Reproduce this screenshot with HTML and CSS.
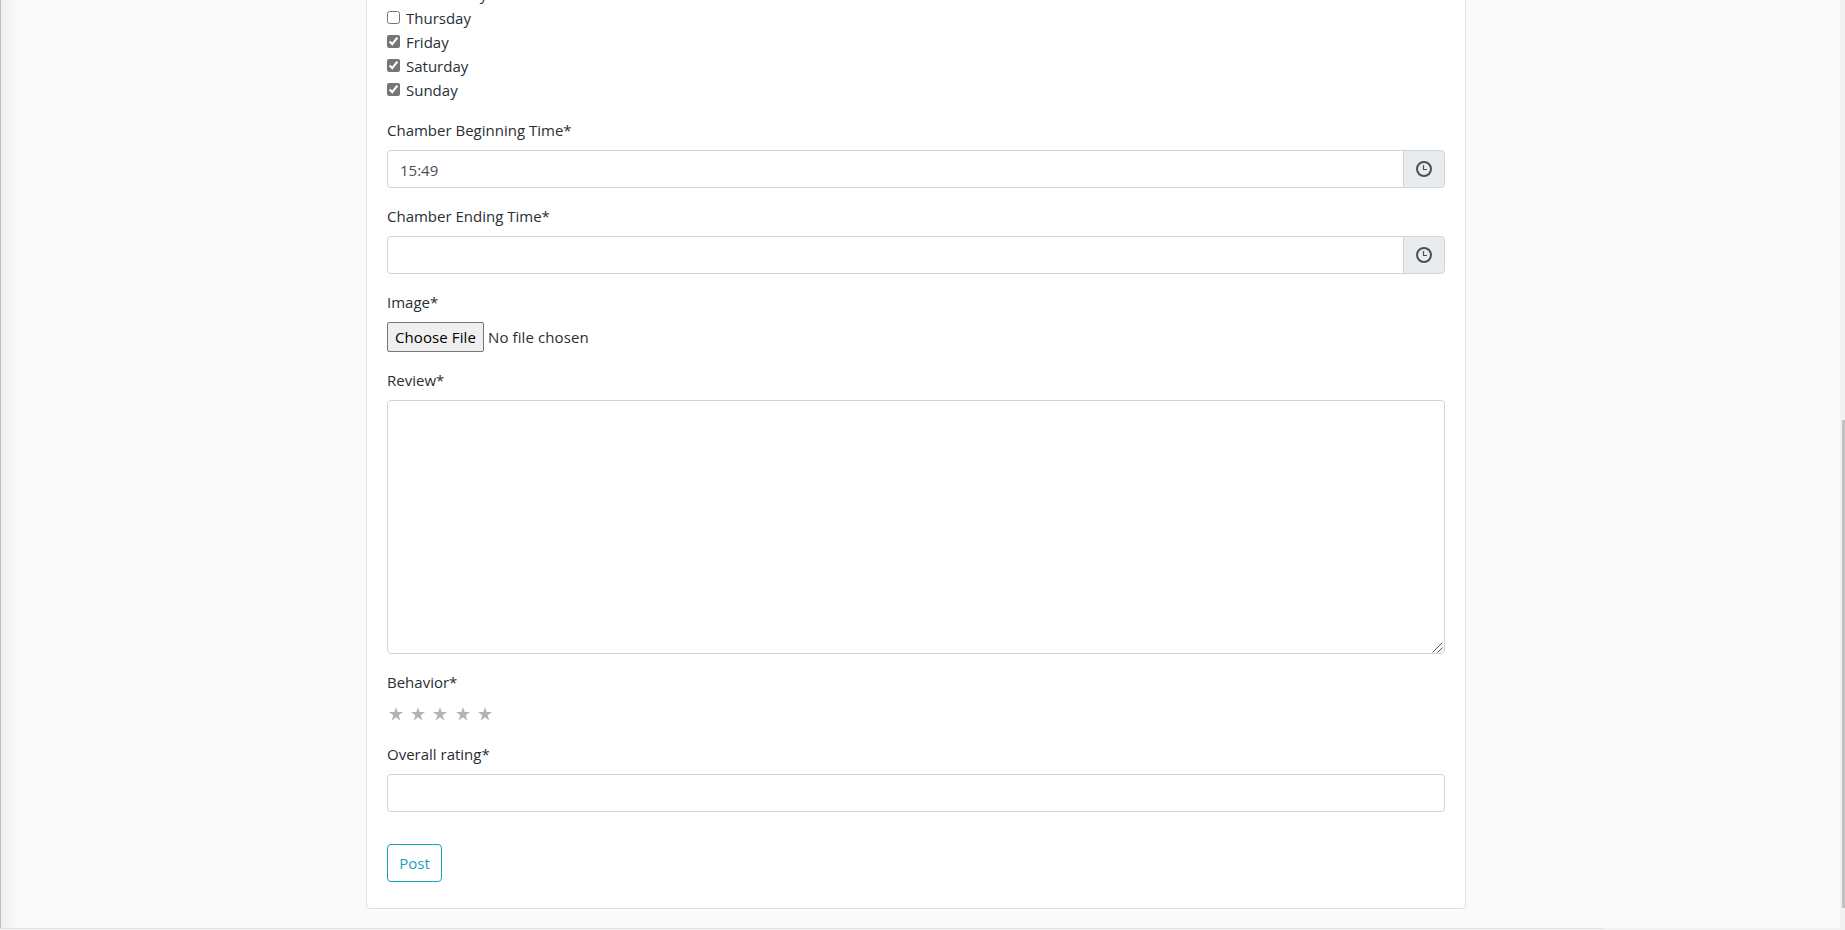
FILE: index.html
```
<!DOCTYPE html>
<html lang="en">
<head>
    <meta charset="UTF-8">
    <meta name="viewport" content="width=device-width, initial-scale=1.0">
    <title>Post a review</title>
    <link rel="stylesheet" href="styles.css">
</head>
<body>
    <div class="page-edge"></div>

    <div class="card">
        <form>
            <div class="form-group days">
                <label class="check"><input type="checkbox" name="days" value="wed"><span>Wednesday</span></label>
                <label class="check"><input type="checkbox" name="days" value="thu"><span>Thursday</span></label>
                <label class="check"><input type="checkbox" name="days" value="fri" checked><span>Friday</span></label>
                <label class="check"><input type="checkbox" name="days" value="sat" checked><span>Saturday</span></label>
                <label class="check"><input type="checkbox" name="days" value="sun" checked><span>Sunday</span></label>
            </div>

            <div class="form-group">
                <label for="begin">Chamber Beginning Time*</label>
                <div class="input-group">
                    <input type="text" id="begin" class="form-control" value="15:49">
                    <span class="input-addon">
                        <svg class="clock" viewBox="0 0 16 16"><circle cx="8" cy="8" r="7"/><path d="M7.5 4v4.5H11"/></svg>
                    </span>
                </div>
            </div>

            <div class="form-group">
                <label for="end">Chamber Ending Time*</label>
                <div class="input-group">
                    <input type="text" id="end" class="form-control">
                    <span class="input-addon">
                        <svg class="clock" viewBox="0 0 16 16"><circle cx="8" cy="8" r="7"/><path d="M7.5 4v4.5H11"/></svg>
                    </span>
                </div>
            </div>

            <div class="form-group">
                <label for="image">Image*</label>
                <input type="file" id="image" class="form-control-file">
            </div>

            <div class="form-group">
                <label for="review">Review*</label>
                <div class="textarea-wrap">
                    <textarea id="review" class="form-control" rows="10"></textarea>
                    <svg class="grip" viewBox="0 0 11 11"><path d="M.5 10.5l10-10M5.5 10.5l5-5"/></svg>
                </div>
            </div>

            <div class="form-group">
                <label>Behavior*</label>
                <div class="stars">
                    <svg viewBox="0 0 14 14"><path d="M7 0l1.65 5.1H14L9.7 8.3l1.6 5.1L7 10.3l-4.3 3.1 1.6-5.1L0 5.1h5.35z"/></svg>
                    <svg viewBox="0 0 14 14"><path d="M7 0l1.65 5.1H14L9.7 8.3l1.6 5.1L7 10.3l-4.3 3.1 1.6-5.1L0 5.1h5.35z"/></svg>
                    <svg viewBox="0 0 14 14"><path d="M7 0l1.65 5.1H14L9.7 8.3l1.6 5.1L7 10.3l-4.3 3.1 1.6-5.1L0 5.1h5.35z"/></svg>
                    <svg viewBox="0 0 14 14"><path d="M7 0l1.65 5.1H14L9.7 8.3l1.6 5.1L7 10.3l-4.3 3.1 1.6-5.1L0 5.1h5.35z"/></svg>
                    <svg viewBox="0 0 14 14"><path d="M7 0l1.65 5.1H14L9.7 8.3l1.6 5.1L7 10.3l-4.3 3.1 1.6-5.1L0 5.1h5.35z"/></svg>
                </div>
            </div>

            <div class="form-group">
                <label for="rating">Overall rating*</label>
                <input type="text" id="rating" class="form-control">
            </div>

            <button type="submit" class="btn-post">Post</button>
        </form>
    </div>

    <div class="bottom-line"></div>
    <div class="scroll-track"><div class="scroll-thumb"></div></div>
</body>
</html>
```
FILE: styles.css
```
* {
    box-sizing: border-box;
}
body {
    position: relative;
    height: 930px;
    margin: 0;
    overflow: hidden;
    background-color: #fafafa;
    color: #2a2e32;
    font-family: "Open Sans", "Noto Sans", sans-serif;
    font-size: 15px;
    line-height: 24px;
}
input, textarea, button {
    font-family: inherit;
    font-size: inherit;
    line-height: inherit;
}
.card {
    width: 1100px;
    margin: -39px 0 0 366px;
    padding: 20px 20px 26px;
    background-color: #fff;
    border: 1px solid #dfdfdf;
    border-radius: 4px;
}
.form-group {
    margin-bottom: 16px;
}
label {
    display: block;
    margin-bottom: 8px;
}
.check {
    display: flex;
    align-items: center;
    gap: 6px;
    margin: 0;
}
.check input {
    width: 13px;
    height: 13px;
    margin: 0 0 1px;
    accent-color: #767676;
}
.form-control {
    display: block;
    width: 100%;
    height: 38px;
    padding: 7px 12px 5px;
    color: #495057;
    background-color: #fff;
    border: 1px solid #ced4da;
    border-radius: 4px;
}
.textarea-wrap {
    position: relative;
}
textarea.form-control {
    height: 254px;
    resize: none;
}
.grip {
    position: absolute;
    right: 2px;
    bottom: 1px;
    width: 11px;
    height: 11px;
    fill: none;
    stroke: #555;
}
.input-group {
    display: flex;
}
.input-group .form-control {
    flex: 1;
    border-radius: 4px 0 0 4px;
}
.input-addon {
    display: flex;
    align-items: center;
    justify-content: center;
    width: 42px;
    margin-left: -1px;
    background-color: #e9ecef;
    border: 1px solid #ced4da;
    border-radius: 0 4px 4px 0;
}
.clock {
    width: 16px;
    height: 16px;
    margin-right: 1px;
    fill: none;
    stroke: #495057;
    stroke-width: 2;
}
.clock path {
    stroke-width: 1.2;
}
.form-control-file {
    display: block;
    width: 100%;
    height: 30px;
    letter-spacing: 0.1px;
}
.form-control-file::file-selector-button {
    height: 30px;
    margin: 0 4px 0 0;
    padding: 1px 7px;
    font: inherit;
    letter-spacing: 0.1px;
    color: #000;
    background-color: #efefef;
    border: 1px solid #767676;
    border-radius: 2px;
}
.stars {
    display: flex;
    gap: 8.4px;
    height: 24px;
    padding: 5px 1.5px 0;
}
.stars svg {
    width: 14px;
    height: 14px;
    fill: #b3b3b3;
}
.btn-post {
    display: block;
    width: 55px;
    height: 38px;
    margin-top: 32px;
    padding: 6px 0;
    color: #17a2b8;
    background-color: transparent;
    border: 1px solid #17a2b8;
    border-radius: 4px;
}
/* shadow of the side panel along the left edge */
.page-edge {
    position: absolute;
    top: 0;
    left: 0;
    width: 16px;
    height: 928px;
    border-left: 1px solid #c0c0c0;
    background: linear-gradient(to right, #eeeeee, #fafafa);
}
.bottom-line {
    position: absolute;
    left: 0;
    bottom: 0;
    width: 100%;
    height: 2px;
    background: linear-gradient(#e4e4e4, #e4e4e4) 0 0 / 1603px 1px no-repeat #f3f3f3;
}
.scroll-track {
    position: absolute;
    top: 0;
    right: 0;
    width: 5px;
    height: 930px;
    padding: 420px 0 0 2px;
    background-color: #f1f1f1;
}
.scroll-thumb {
    height: 488px;
    background-color: #c1c1c1;
}
```
